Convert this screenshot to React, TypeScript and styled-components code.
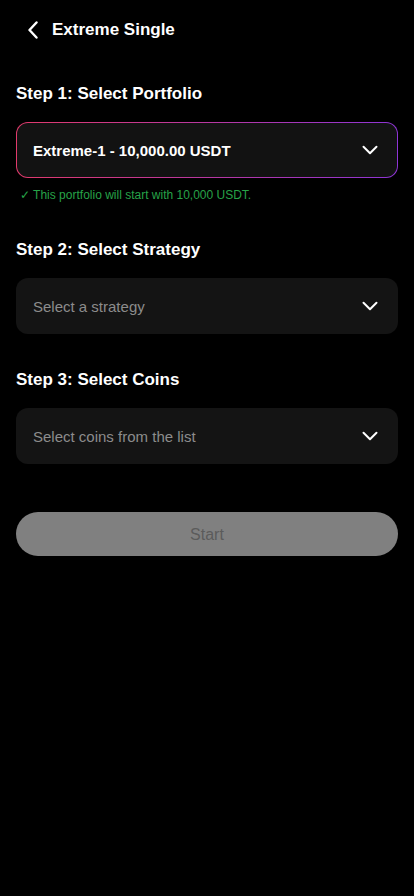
import React from 'react';
import styled, { createGlobalStyle } from 'styled-components';

const GlobalStyle = createGlobalStyle`
	html,
	body {
		margin: 0;
		padding: 0;
		background: #000000;
	}
	body {
		font-family: 'Liberation Sans', Arial, sans-serif;
		color: #ffffff;
	}
`;

interface SelectProps {
	value?: string;
	placeholder: string;
	active?: boolean;
}

const ChevronDown = (): JSX.Element => (
	<svg width="16" height="10" viewBox="0 0 16 10" fill="none">
		<path
			d="M1.5 1.8 8 8.2l6.5-6.4"
			stroke="#ffffff"
			strokeWidth="2"
			strokeLinecap="round"
			strokeLinejoin="round"
		/>
	</svg>
);

const SelectBox: React.FC<SelectProps> = ({
	value,
	placeholder,
	active,
}: SelectProps): JSX.Element => {
	return (
		<SelectWrapper $active={active}>
			<SelectText $filled={!!value}>{value || placeholder}</SelectText>
			<ChevronDown />
		</SelectWrapper>
	);
};

const App: React.FC = (): JSX.Element => {
	return (
		<>
			<GlobalStyle />
			<Page>
				<Header>
					<BackButton aria-label="Back">
						<svg width="12" height="18" viewBox="0 0 12 18" fill="none">
							<path
								d="M9.5 1.5 2.5 9l7 7.5"
								stroke="#ffffff"
								strokeWidth="2.4"
								strokeLinecap="round"
								strokeLinejoin="round"
							/>
						</svg>
					</BackButton>
					<Title>Extreme Single</Title>
				</Header>

				<StepLabel $top={24}>Step 1: Select Portfolio</StepLabel>
				<SelectBox value="Extreme-1 - 10,000.00 USDT" placeholder="" active />
				<Hint>✓ This portfolio will start with 10,000 USDT.</Hint>

				<StepLabel $top={38}>Step 2: Select Strategy</StepLabel>
				<SelectBox placeholder="Select a strategy" />

				<StepLabel $top={36}>Step 3: Select Coins</StepLabel>
				<SelectBox placeholder="Select coins from the list" />

				<StartButton disabled>Start</StartButton>
			</Page>
		</>
	);
};

const Page = styled.div`
	min-height: 896px;
	padding: 0 16px;
	box-sizing: border-box;
	display: flex;
	flex-direction: column;
	background: #000000;
`;

const Header = styled.div`
	height: 60px;
	display: flex;
	align-items: center;
	gap: 13px;
	padding-left: 11px;
`;

const BackButton = styled.button`
	background: none;
	border: none;
	padding: 0;
	width: 12px;
	height: 18px;
	display: flex;
	cursor: pointer;
`;

const Title = styled.h1`
	margin: 0;
	font-size: 17px;
	line-height: 22px;
	font-weight: 700;
	color: #ffffff;
`;

const StepLabel = styled.h2<{ $top: number }>`
	margin: ${(p) => p.$top}px 0 18px;
	font-size: 17px;
	line-height: 20px;
	font-weight: 700;
	color: #ffffff;
`;

const SelectWrapper = styled.div<{ $active?: boolean }>`
	height: 56px;
	box-sizing: border-box;
	display: flex;
	align-items: center;
	justify-content: space-between;
	padding: 0 19px 0 16px;
	border-radius: 12px;
	border: 1px solid transparent;
	background: ${(p) =>
		p.$active
			? 'linear-gradient(#121212, #121212) padding-box, linear-gradient(90deg, #e23a6c, #8e35d6) border-box'
			: '#141414'};
`;

const SelectText = styled.span<{ $filled: boolean }>`
	font-size: 15px;
	font-weight: ${(p) => (p.$filled ? 700 : 400)};
	color: ${(p) => (p.$filled ? '#ffffff' : '#8c8c8c')};
`;

const Hint = styled.p`
	margin: 10px 0 0 4px;
	font-size: 12px;
	line-height: 14px;
	color: #27a348;
`;

const StartButton = styled.button`
	margin-top: 48px;
	height: 44px;
	padding-top: 2px;
	border: none;
	border-radius: 22px;
	background: #808080;
	color: #5b5b5b;
	font-family: 'Liberation Sans', Arial, sans-serif;
	font-size: 16px;
	cursor: not-allowed;
`;

export default App;
